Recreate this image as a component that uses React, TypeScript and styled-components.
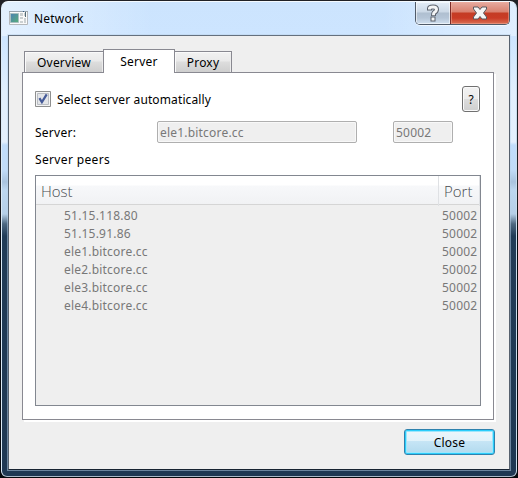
import React from "react";
import styled, { createGlobalStyle } from "styled-components";

const GlobalStyle = createGlobalStyle`
  * { box-sizing: border-box; }
  html, body { margin: 0; padding: 0; background: #05070b; }
  body { overflow: hidden; }
`;

const Window = styled.div`
  width: 518px;
  height: 478px;
  padding: 1px;
  background: linear-gradient(#202126 0, #202126 190px, #05070b 235px);
  font-family: "Noto Sans", "DejaVu Sans", sans-serif;
  font-size: 12px;
  line-height: 16px;
  letter-spacing: 0.12px;
  color: #000;
`;

const Frame = styled.div`
  display: flex;
  flex-direction: column;
  width: 516px;
  height: 476px;
  padding: 0 6px 6px;
  border: 1px solid;
  border-color: #f4faff #c9dcec #a9b9c8 #dcebf8;
  border-radius: 7px 7px 6px 6px;
  background:
    linear-gradient(90deg, #ffffff70 0, #ffffff00 150px, #ffffff00 380px, #ffffff60 100%) 0 0 / 100% 34px no-repeat,
    linear-gradient(#cce4fe 0, #cde5ff 34px, #e1effd 90px, #e4f0fd 140px, #c1ddfb 143px, #c1dbf7 168px, #a9c3de 180px, #bdd7f0 188px, #b5cfe8 212px, #4d6881 222px, #213c57 234px, #1f3853 100%);
`;

const TitleBar = styled.header`
  display: flex;
  height: 33px;
  flex: none;
  padding-left: 1px;
`;

const AppIcon = styled.svg`
  width: 19px;
  height: 16px;
  margin-top: 8px;
  flex: none;
`;

const Title = styled.h1`
  margin: 9px auto 0 6px;
  font: inherit;
  letter-spacing: 0.2px;
`;

const Captions = styled.div`
  display: flex;
  width: 95px;
  height: 23px;
  border: 1px solid #505b69;
  border-top: 0;
  border-radius: 0 0 5px 5px;
  overflow: hidden;
  box-shadow: 0 1px #ffffffa0;
`;

const Caption = styled.button<{ $close?: boolean }>`
  display: flex;
  align-items: center;
  justify-content: center;
  width: ${(p) => (p.$close ? 59 : 34)}px;
  height: 22px;
  padding: 0;
  border: 0;
  border-left: ${(p) => (p.$close ? "1px solid #7b2b27" : "0")};
  box-shadow: inset 0 0 0 1px ${(p) => (p.$close ? "#f0b0a080" : "#ffffff90")};
  background: ${(p) =>
    p.$close
      ? "linear-gradient(#e7aba0 0, #d9816f 10px, #c43c24 11px, #c93b25 16px, #da7156 22px)"
      : "linear-gradient(#e4edf7 0, #cbd8e6 10px, #afbfd0 11px, #b5c5d7 16px, #d2e1f0 22px)"};
`;

const Client = styled.main`
  display: flex;
  flex-direction: column;
  width: 502px;
  height: 435px;
  padding: 13px 14px 14px 13px;
  border: 1px solid;
  border-color: #65707d #56616e #172331 #56616e;
  box-shadow: 0 0 0 1px #b9d2e980;
  background: #efefef;
`;

const Tabs = styled.nav`
  display: flex;
  align-items: flex-end;
  height: 23px;
  flex: none;
  padding-left: 2px;
  position: relative;
`;

const Tab = styled.button<{ $width: number; $active?: boolean }>`
  width: ${(p) => p.$width}px;
  height: ${(p) => (p.$active ? 24 : 21)}px;
  margin-bottom: ${(p) => (p.$active ? -1 : 0)}px;
  padding: 1px 0 0;
  border: 1px solid #898991;
  border-bottom: 0;
  background: ${(p) => (p.$active ? "#fff" : "linear-gradient(#f2f2f2 0, #eaeaea 9px, #dddddd 10px, #cecece 100%)")};
  box-shadow: ${(p) => (p.$active ? "none" : "inset 1px 1px #fafafa, inset -1px 0 #ececec")};
  font: inherit;
  letter-spacing: 0.2px;
  white-space: nowrap;
  color: #000;

  &:first-child { border-right: 0; }
  &:last-child { border-left: 0; }
`;

const Page = styled.section`
  width: 472px;
  height: 348px;
  flex: none;
  padding: 13px 12px 12px;
  border: 1px solid #898991;
  box-shadow: 2px 2px #fff;
  background: #fff;
`;

const OptionRow = styled.div`
  display: flex;
  align-items: center;
  height: 26px;
`;

const CheckLabel = styled.label`
  display: flex;
  align-items: center;
  gap: 6px;
`;

const LabelText = styled.span`
  padding-top: 2px;
`;

const CheckBox = styled.svg`
  width: 16px;
  height: 16px;
`;

const HelpButton = styled.button`
  width: 18px;
  height: 26px;
  margin: 0 1px 0 auto;
  padding: 2px 0 0;
  border: 1px solid #707070;
  border-radius: 3px;
  box-shadow: inset 0 0 0 1px #fafafa;
  background: linear-gradient(#f2f2f2 0, #ebebeb 50%, #dddddd 50%, #cfcfcf 100%);
  font: inherit;
  color: #000;
`;

const ServerRow = styled.div`
  display: grid;
  grid-template-columns: 122px 200px 96px;
  align-items: center;
  height: 22px;
  margin-top: 9px;
  letter-spacing: 0.25px;
`;

const Field = styled.input<{ $port?: boolean }>`
  width: ${(p) => (p.$port ? 60 : 200)}px;
  height: 22px;
  margin-left: ${(p) => (p.$port ? 36 : 0)}px;
  padding: 0 2px;
  border: 1px solid #afafaf;
  border-radius: 2px;
  box-shadow: inset 0 0 0 1px #f8f8f8;
  background: #efefef;
  font: inherit;
  letter-spacing: 0.2px;
  color: #787878;
`;

const PeersLabel = styled.div`
  height: 16px;
  margin: 9px 0 7px;
  letter-spacing: 0.35px;
`;

const PeerTable = styled.div`
  width: 446px;
  height: 231px;
  border: 1px solid #828790;
  background: #efefef;
  color: #787878;
`;

const HeaderRow = styled.div`
  display: grid;
  grid-template-columns: 403px 41px;
  height: 29px;
  border-bottom: 1px solid #d5d5d5;
  background: linear-gradient(#fff 0, #fff 9px, #f7f8fa 10px, #f1f2f4 28px);
  font-family: "Open Sans", "Noto Sans", sans-serif;
  font-weight: 300;
  font-size: 15px;
  line-height: 30px;
  letter-spacing: 0;
  color: #484b50;
`;

const HeaderCell = styled.div`
  padding-left: 5px;
  border-right: 1px solid #dfe1e4;
`;

const Rows = styled.div`
  padding-top: 2px;
`;

const PeerRow = styled.div`
  display: grid;
  grid-template-columns: 403px 41px;
  height: 18px;
  line-height: 18px;
  letter-spacing: 0.2px;
`;

const Host = styled.span`
  padding-left: 28px;
`;

const Port = styled.span`
  padding-left: 3px;
`;

const Footer = styled.footer`
  display: flex;
  justify-content: flex-end;
  margin-top: 9px;
`;

const CloseButton = styled.button`
  width: 91px;
  height: 26px;
  padding: 2px 0 0;
  border: 1px solid #2f82ad;
  border-radius: 3px;
  box-shadow: inset 0 0 0 1px #2bcdfb, inset 0 0 0 2px #9de6fc;
  background: linear-gradient(#edf6fb 0, #e1f2fa 46%, #c6e5f5 47%, #b1daee 100%);
  font: inherit;
  letter-spacing: 0.2px;
  color: #000;
`;

const peers = ["51.15.118.80", "51.15.91.86", "ele1.bitcore.cc", "ele2.bitcore.cc", "ele3.bitcore.cc", "ele4.bitcore.cc"];

export default function App() {
  return (
    <>
      <GlobalStyle />
      <Window>
        <Frame>
          <TitleBar>
            <AppIcon viewBox="0 0 19 16">
              <defs>
                <linearGradient id="screen" x1="0" y1="0" x2="1" y2="1">
                  <stop offset="0" stopColor="#4b80b4" />
                  <stop offset="1" stopColor="#58ae79" />
                </linearGradient>
              </defs>
              <path fill="#fafafa" stroke="#b4b7ba" d="M.5 1.5h18v13H.5z" />
              <path fill="#9aa5ae" d="M0 1h19v1H0z" />
              <path fill="#345b83" d="M14 1h1v1h-1z" />
              <path fill="url(#screen)" stroke="#a9bfc0" d="M1.5 3.5h8v9h-8z" />
              <path fill="#cbd0d2" d="M11 3h3v3h-3zm0 4h3v2h-3zm0 4h3v2h-3zM15 3h1v3h-1zm0 5h2v5h-2z" />
              <path fill="#526b76" d="M16 2h1v5h-1z" />
            </AppIcon>
            <Title>Network</Title>
            <Captions>
              <Caption aria-label="Help">
                <svg width="14" height="20" viewBox="0 0 14 20">
                  <path d="M3.5 7.5V5.6Q3.5 4 7 4t3.5 2.5Q10.5 8.2 8 9.7 7.5 10.2 7.5 13" fill="none" stroke="#5c626d" strokeWidth="5" />
                  <path d="M4.5 13.5h5v5h-5z" fill="#5c626d" />
                  <path d="M3.5 6.5V5.6Q3.5 4 7 4t3.5 2.5Q10.5 8.2 8 9.7 7.5 10.2 7.5 12.2" fill="none" stroke="#f4f5f6" strokeWidth="3" />
                  <path d="M5.5 14.5h3v3h-3z" fill="#f4f5f6" />
                </svg>
              </Caption>
              <Caption $close aria-label="Close window">
                <svg width="16" height="16" viewBox="0 0 16 16">
                  <path d="M1.5 2H6l2 2.5L10 2h4.5v2l-3 4 3 4v2H10l-2-2.5L6 14H1.5v-2l3-4-3-4z" fill="#f5f5f5" stroke="#59595f" strokeLinejoin="round" />
                </svg>
              </Caption>
            </Captions>
          </TitleBar>
          <Client>
            <Tabs>
              <Tab $width={79}>Overview</Tab>
              <Tab $width={72} $active>Server</Tab>
              <Tab $width={57}>Proxy</Tab>
            </Tabs>
            <Page>
              <OptionRow>
                <CheckLabel>
                  <CheckBox viewBox="0 0 16 16">
                    <path fill="#f4f4f4" stroke="#8e8f8f" d="M.5.5h15v15H.5z" />
                    <path fill="#e3e5e8" stroke="#b9bdc3" d="M2.5 2.5h11v11h-11z" />
                    <path fill="none" stroke="#465b99" strokeWidth="2.2" d="m4.4 7.2 2.5 4 4.8-7.8" />
                  </CheckBox>
                  <LabelText>Select server automatically</LabelText>
                </CheckLabel>
                <HelpButton>?</HelpButton>
              </OptionRow>
              <ServerRow>
                <LabelText>Server:</LabelText>
                <Field value="ele1.bitcore.cc" disabled />
                <Field $port value="50002" disabled />
              </ServerRow>
              <PeersLabel>Server peers</PeersLabel>
              <PeerTable>
                <HeaderRow>
                  <HeaderCell>Host</HeaderCell>
                  <HeaderCell>Port</HeaderCell>
                </HeaderRow>
                <Rows>
                  {peers.map((host) => (
                    <PeerRow key={host}>
                      <Host>{host}</Host>
                      <Port>50002</Port>
                    </PeerRow>
                  ))}
                </Rows>
              </PeerTable>
            </Page>
            <Footer>
              <CloseButton>Close</CloseButton>
            </Footer>
          </Client>
        </Frame>
      </Window>
    </>
  );
}
